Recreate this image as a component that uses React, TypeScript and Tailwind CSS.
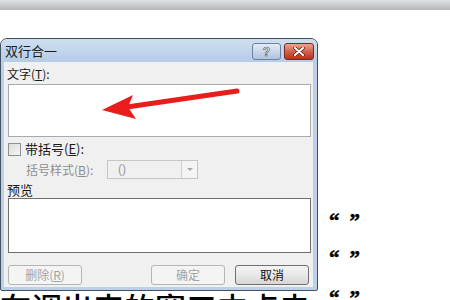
import React from 'react';

const cjk = { fontFamily: '"Noto Sans CJK SC", "Liberation Sans", sans-serif' };

const DlgButton = ({ label, disabled }: { label: React.ReactNode; disabled?: boolean }) => (
  <div
    className={
      disabled
        ? 'w-[74px] h-[20px] rounded-[3px] border border-[#b5b5b5] bg-[#f4f4f4] text-[#a3a3a3] text-[12px] leading-[18px] text-center'
        : 'w-[74px] h-[20px] rounded-[3px] border border-[#707070] bg-gradient-to-b from-[#f4f4f4] via-[#e8e8e8] to-[#d6d6d6] text-[#111] text-[12px] leading-[18px] text-center'
    }
  >
    {label}
  </div>
);

const Quote = () => (
  <div className="h-[37px] flex items-center text-[21px] font-bold text-black" style={{ fontFamily: '"Liberation Serif", serif', WebkitTextStroke: '0.5px #000' }}>
    <span className="pt-[6px]">“</span>
    <span className="pt-[6px] ml-[10px]">”</span>
  </div>
);

const App = () => {
  return (
    <div className="w-[450px] h-[300px] overflow-hidden bg-white" style={cjk}>
      <div className="h-[10px] bg-gradient-to-b from-[#e0e1e2] to-[#b4b8bb]" />
      <div className="flex mt-[28px]">
        {/* dialog */}
        <div className="w-[318px] rounded-t-[7px] rounded-b-[2px] border border-[#42505f] bg-[#bcd1e9]">
          <div className="h-[23px] flex items-start rounded-t-[6px] bg-gradient-to-b from-[#cfdff0] to-[#b5cce7]">
            <div className="pl-[4px] pt-[4px] text-[13px] leading-[16px] text-[#1c1c1c]">双行合一</div>
            <div className="ml-auto flex gap-[3px] pt-[4px] pr-[3px]">
              <div className="w-[29px] h-[17px] rounded-[3px] border border-[#6f8299] bg-gradient-to-b from-[#e4ecf6] to-[#aec3dd] flex items-center justify-center text-[12px] font-bold text-white" style={{ fontFamily: '"Liberation Sans", sans-serif', WebkitTextStroke: '0.6px #3d4f66' }}>
                ?
              </div>
              <div className="w-[30px] h-[17px] rounded-[3px] border border-[#7c2a1d] bg-gradient-to-b from-[#eba595] via-[#d0624c] to-[#b8301c] flex items-center justify-center">
                <svg width="12" height="9" viewBox="0 0 12 9">
                  <path d="M2 1 L10 8 M10 1 L2 8" stroke="#5c1a10" strokeWidth="3.4" strokeLinecap="round" />
                  <path d="M2 1 L10 8 M10 1 L2 8" stroke="#fff" strokeWidth="2" strokeLinecap="round" />
                </svg>
              </div>
            </div>
          </div>
          <div className="ml-[3px] mr-[4px] mb-[3px] bg-[#f0f0f0] pt-[5px] pb-[2px]">
            <div className="pl-[3px] h-[14px] text-[12px] leading-[14px] text-[#1a1a1a]">
              文字(<span className="underline">T</span>):
            </div>
            <div className="relative ml-[4px] mt-[3px] w-[303px] h-[53px] border border-[#a7a9ae] bg-white">
              <svg className="absolute left-0 top-0" width="303" height="53" viewBox="0 0 303 53">
                <path d="M228 6 L118 22" stroke="#ea1d1d" strokeWidth="5" strokeLinecap="round" />
                <path d="M93 25 L124 10 L119 22 L127 34 Z" fill="#ea1d1d" />
              </svg>
            </div>
            <div className="flex items-center ml-[4px] mt-[4px] h-[16px]">
              <div className="w-[13px] h-[13px] border border-[#8e8f8f] bg-gradient-to-br from-[#dcdcdc] to-[#f6f6f6]" />
              <div className="ml-[4px] text-[13px] leading-[16px] text-[#1a1a1a]">
                带括号(<span className="underline">E</span>):
              </div>
            </div>
            <div className="flex items-center ml-[22px] mt-[3px] h-[19px]">
              <div className="w-[81px] text-[12px] text-[#8e8e8e]">
                括号样式(<span className="underline">B</span>):
              </div>
              <div className="flex w-[91px] h-[19px] border border-[#c6c6c6] bg-[#f0f0f0]">
                <div className="flex-1 pl-[10px] text-[12px] leading-[17px] text-[#9a9a9a]" style={{ fontFamily: '"Liberation Sans", sans-serif' }}>()</div>
                <div className="w-[16px] h-full border-l border-[#d0d0d0] bg-[#f4f4f4] flex items-center justify-center">
                  <div className="w-0 h-0 border-l-[3px] border-r-[3px] border-t-[3px] border-l-transparent border-r-transparent border-t-[#a8a8a8]" />
                </div>
              </div>
            </div>
            <div className="pl-[3px] mt-[4px] h-[14px] text-[13px] leading-[14px] text-[#1a1a1a]">预览</div>
            <div className="ml-[4px] mt-[1px] w-[303px] h-[55px] border border-[#6f6f6f] bg-white" />
            <div className="flex ml-[4px] mr-[4px] mt-[12px]">
              <DlgButton disabled label={<>删除(<span className="underline">R</span>)</>} />
              <div className="ml-auto">
                <DlgButton disabled label="确定" />
              </div>
              <div className="ml-[10px]">
                <DlgButton label="取消" />
              </div>
            </div>
          </div>
        </div>
        {/* article quotes */}
        <div className="ml-[11px] pt-[162px]">
          <Quote />
          <Quote />
        </div>
      </div>
      <div className="flex items-start">
        <div className="w-[318px] text-[31px] font-medium leading-[36px] -mt-[2px] text-black whitespace-nowrap overflow-hidden">
          在调出来的窗口中点击
        </div>
        <div className="ml-[11px] -mt-[14px]">
          <Quote />
        </div>
      </div>
    </div>
  );
};

export default App;
